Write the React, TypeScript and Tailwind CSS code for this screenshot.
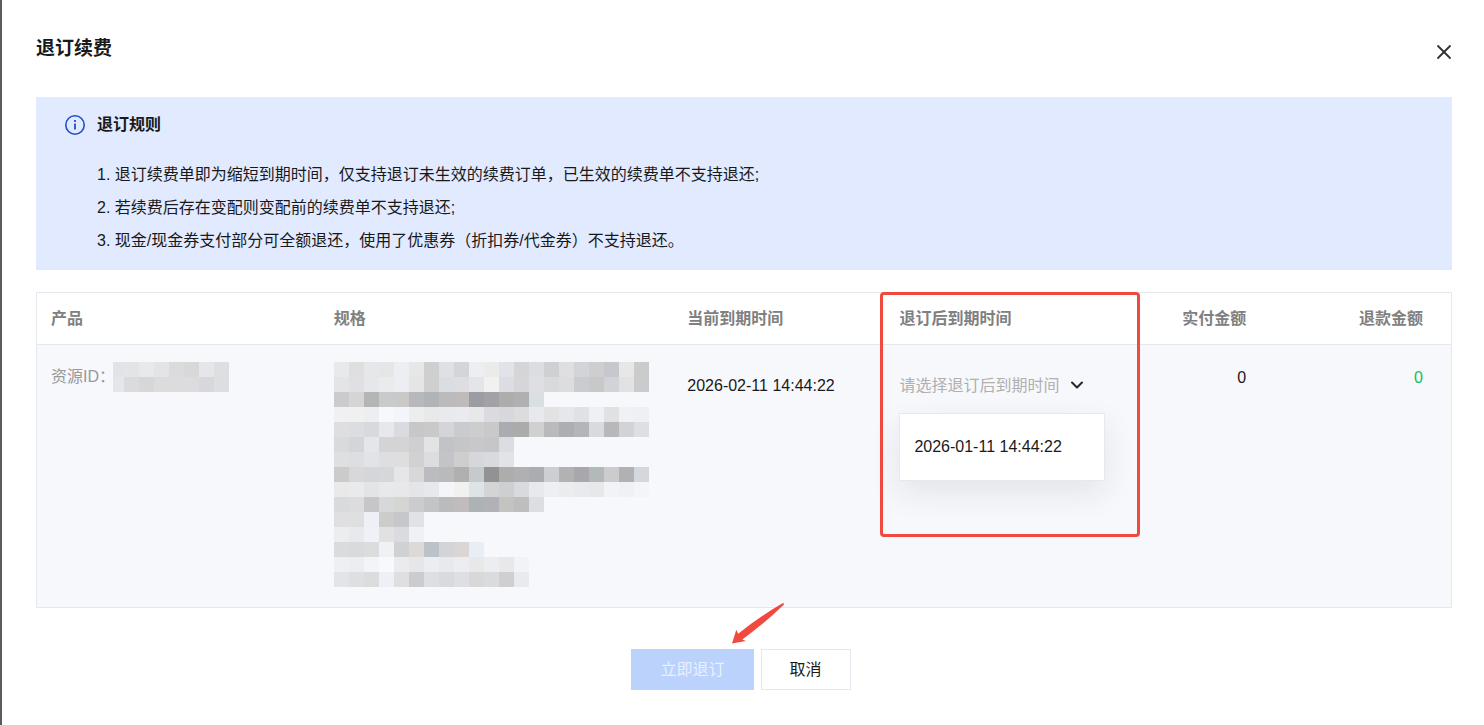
import React, { useState } from 'react';
import { ChevronDown, X } from 'lucide-react';

const rules = [
  '退订续费单即为缩短到期时间，仅支持退订未生效的续费订单，已生效的续费单不支持退还;',
  '若续费后存在变配则变配前的续费单不支持退还;',
  '现金/现金券支付部分可全额退还，使用了优惠券（折扣券/代金券）不支持退还。',
];

const expireOptions = ['2026-01-11 14:44:22'];

const idBlocks = [
  'e2e3e6 e3e4e6 e8e9eb e3e4e6 dbdbdd d8d8d9 e5e6e9 dedfe1',
  'e5e6e9 dbdbdd d7d7d9 dcdcdd dcdcde dcdcde d8d8dc dddee1',
];

const specBlocks = [
  'e8e9eb dfdfe0 e5e7ea e6e6e7 edeef1 e7e7e8 cecfd0 dfe0e4 d4d5d9 edeef1 ebebea e2e3e8 d5d5d7 dcdde0 cfd0d4 dfdfe1 d3d4d7 cececf c7c8cd e7e7e8 cbcbcc',
  'e2e4e7 dfe0e1 e5e7ea eaebec edeef1 e5e5e7 cfcfd0 dadee3 dddee2 e4e5e9 f1f1f1 dcdde2 d4d6da dedee3 d9dadb dcddde cbccd0 c8c8c9 d2d3d7 e1e2e3 cacbcc',
  'cbcbcd d5d5d6 b5b5b6 c9cacc cbc8c8 b7b8bc b0b4b7 bbbbbe bfbbbb 9b9da2 a2a1a6 adadad b0b0b2 dadfe3',
  'f0f0f2 f0f0f1 edeef2 f7f8fd f3f5fa ecedef e9e9ea e9eaee eaebf0 e7e8e9 dbdbdf d7d8db dcdcdd e8e9ed e2e2e3 e6e7ea e0e1e5 eff0f4 e0e1e2 f1f1f3 eff0f4',
  'dedee0 dcdde0 d8d9dd e7e8eb dadbde c7c7c9 c9c9c9 d4d5d8 cacbcf cdcdcf c9c9ca a9acb1 ababac d0d0d1 bababc adaeb2 b4b5b9 d9dadd b8b8ba d2d3d6 dedfe3',
  'd9dadc d4d5d8 e5e6ea d4d4d6 d4d4d5 cfcfd2 e2e3e4 c2c3c7 c6c6c6 c8c7cb c5c6c8 dcdde3',
  'dedfe0 dddee1 e2e3e7 dddedf dedede d1d1d3 dddddf c2c4c8 cecece d5d7da d9dadd e2e3e6',
  'cbcbcc d8d8d9 d5d6d9 d6d7da e5e6ea d8d8d9 bbbcc0 b9babc b0b0b0 c5cacd 929292 adadae b0b0b2 abacb0 cdced2 b2b2b3 a9a7ac b3b8b9 cccccd b1b1b3 d4d8dc',
  'e9e9ea e9eaed e3e4e5 e8e9eb e8e8ea e4e5e8 e7e8eb f3f5f9 f1f1f0 dee3e7 d4d4d5 cecfd0 d9dadd e8e9ed eeeff2 ebecee e9eaed e7e8ea f2f3f7 f0f1f4 f4f5f8',
  'd9dadc dcdcdd c6c5ca d7d8da d5d5d4 cccccf c3c4c8 bbbabd c0bcbd adb2b5 b0b2b7 c3c3c2 bebebf dbdfe4',
  'dfdfe1 dedfe0 eff0f5 cccccb c6c7cb e1e2e6',
  'ecedee e8e9ec f0f1f6 e1e1e2 dadbdf f0f1f6',
  'dadbdc d9dadb dbdcdc f0f1f4 d0d1d2 dcdad7 bbc2ca d3d4d6 d9d6d3 e8eef5',
  'eeeff2 ecedf0 f3f4f7 f7f9fd ebebed e5e6ea ecedf0 e8e9ec ecedf0 e8e8e9 ecedf0 e8e8ea f2f3f6',
  'e3e4e8 dedfe3 dbdcdc eff0f5 dfdfe1 cbcccf dedfe3 d9dade dedfe3 d8d8d9 dadbdf cfcfd0 e9eaed',
];

// masks private values, one hex colour per 15px block
const Mosaic = ({ rows, width, crop = 0 }: { rows: string[]; width: number; crop?: number }) => (
  <svg
    className="block shrink-0"
    width={width}
    height={rows.length * 15}
    viewBox={`${crop} 0 ${width} ${rows.length * 15}`}
    shapeRendering="crispEdges"
    aria-hidden
  >
    {rows.map((row, y) =>
      row.split(' ').map((color, x) => (
        <rect key={`${x}-${y}`} x={x * 15} y={y * 15} width="15" height="15" fill={`#${color}`} />
      ))
    )}
  </svg>
);

const InfoIcon = () => (
  <svg width="20" height="20" viewBox="0 0 20 20" fill="none" stroke="#1c4fc9" aria-hidden>
    <circle cx="10" cy="10" r="9.2" strokeWidth="1.6" />
    <path d="M10 5v2M10 8.6v5.9" strokeWidth="1.8" />
  </svg>
);

const App = () => {
  const [open, setOpen] = useState(true);
  const [expire, setExpire] = useState('');

  const choose = (value: string) => {
    setExpire(value);
    setOpen(false);
  };

  return (
    <div className="min-h-screen border-l-2 border-[#5c5c5e] bg-white pt-[34px] pr-8 pb-8 pl-[34px] font-['Liberation_Sans','Noto_Sans_CJK_SC',sans-serif] text-base text-[#191919]">
      <header className="mb-[33px] flex items-end justify-between">
        <h1 className="text-[19px] leading-[30px] font-bold">退订续费</h1>
        <button type="button" aria-label="关闭" className="-mr-1 text-[#333333]">
          <X size={24} strokeWidth={1.8} />
        </button>
      </header>

      <section className="bg-[#e1eaff] pt-4 pr-7 pb-[13px] pl-[29px]">
        <div className="mb-[21px] flex items-center gap-3">
          <InfoIcon />
          <h2 className="leading-6 font-bold">退订规则</h2>
        </div>
        <ol className="list-inside list-decimal pl-8 leading-[33px]">
          {rules.map((rule) => (
            <li key={rule}>{rule}</li>
          ))}
        </ol>
      </section>

      <table className="mt-[22px] w-full table-fixed border-separate border-spacing-0 border border-[#e5e8ef]">
        <thead>
          <tr className="text-left text-[#808080] [&>th]:h-[52px] [&>th]:border-b [&>th]:border-[#e5e8ef] [&>th]:py-0">
            <th className="w-[20%] px-[14px]">产品</th>
            <th className="w-[25%] px-[14px]">规格</th>
            <th className="w-[15%] px-[14px]">当前到期时间</th>
            <th className="relative w-[15%] px-[14px]">
              退订后到期时间
              <div className="pointer-events-none absolute -top-px -left-[5px] z-20 h-[245px] w-[260px] rounded-[4px] border-3 border-[#f04a3e]" />
            </th>
            <th className="px-7 text-right">实付金额</th>
            <th className="px-7 text-right">退款金额</th>
          </tr>
        </thead>
        <tbody>
          <tr className="bg-[#f7f8fc] align-top">
            <td className="px-[14px] pt-[17px]">
              <div className="flex items-center">
                <span className="w-[62px] whitespace-nowrap text-[#999999]">资源ID：</span>
                <Mosaic rows={idBlocks} width={116} crop={4} />
              </div>
            </td>
            <td className="px-[14px] pt-[17px] pb-5">
              <Mosaic rows={specBlocks} width={315} />
            </td>
            <td className="px-[14px] pt-[26px] leading-[30px] whitespace-nowrap">2026-02-11 14:44:22</td>
            <td className="relative px-[14px] pt-[26px]">
              <div className="relative inline-block">
                <select
                  aria-label="退订后到期时间"
                  value={expire}
                  onChange={(e) => choose(e.target.value)}
                  className={`block h-[30px] w-[190px] appearance-none bg-transparent ${expire ? 'text-[#191919]' : 'text-[#b0b0b0]'}`}
                >
                  <option value="">请选择退订后到期时间</option>
                  {expireOptions.map((item) => (
                    <option key={item} value={item}>{item}</option>
                  ))}
                </select>
                <ChevronDown size={20} strokeWidth={2.4} className="pointer-events-none absolute top-1 right-[2px] text-[#262626]" />
              </div>
              {open ? (
                <ul className="absolute top-[68px] left-[14px] z-10 w-[206px] border border-[#e5e8ef] bg-white shadow-[0_12px_32px_rgba(30,30,40,0.09)]">
                  {expireOptions.map((item) => (
                    <li key={item}>
                      <button type="button" onClick={() => choose(item)} className="h-[66px] w-full px-[14px] text-left whitespace-nowrap">
                        {item}
                      </button>
                    </li>
                  ))}
                </ul>
              ) : null}
            </td>
            <td className="px-7 pt-[18px] text-right leading-[30px]">0</td>
            <td className="px-7 pt-[18px] text-right leading-[30px] text-[#0fbf60]">0</td>
          </tr>
        </tbody>
      </table>

      <footer className="mt-[41px] flex justify-center pr-[6px]">
        <div className="relative flex gap-[7px]">
          <button type="button" disabled={!expire} className="h-[41px] bg-[#2468f2] px-[29px] text-white disabled:bg-[#bad2fc] disabled:text-[#e8f0ff]">
            立即退订
          </button>
          <button type="button" className="h-[41px] border border-[#e5e8ef] bg-white px-7">取消</button>
          <svg className="pointer-events-none absolute -top-[47px] left-[100px]" width="54" height="42" viewBox="0 0 54 42" fill="#f04a3e" aria-hidden>
            <path d="M1 41.5 5.3 27.8 7.2 31.8Q28 15 51.5 1.3 53.5.8 53 2.5 34 21 11.3 37.4L15 39Z" />
          </svg>
        </div>
      </footer>
    </div>
  );
};

export default App;
